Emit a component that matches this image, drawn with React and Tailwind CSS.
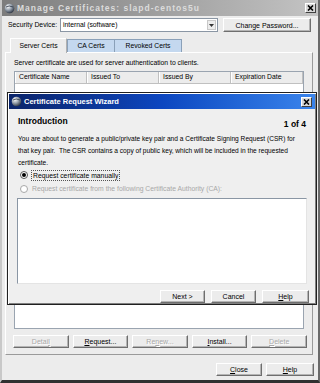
import React from "react";

const font = { fontFamily: '"Liberation Sans", Arial, sans-serif' };

const Btn = ({ children, disabled, className = "" }) => (
  <div
    className={`h-[13px] flex items-center justify-center bg-[#ececec] border border-t-white border-l-white border-r-[#6e6e6e] border-b-[#6e6e6e] shadow-[inset_-1px_-1px_0_#b4b4b4] text-[7px] leading-none ${
      disabled ? "text-[#a8a8a8] [text-shadow:1px_1px_0_#ffffff]" : "text-black"
    } ${className}`}
  >
    {children}
  </div>
);

const CloseBox = () => (
  <div className="w-[11px] h-[10px] bg-[#d8d8d8] border border-t-white border-l-white border-r-[#404040] border-b-[#404040] flex items-center justify-center">
    <svg width="7" height="6" viewBox="0 0 7 6">
      <path d="M1 0.5 L6 5.5 M6 0.5 L1 5.5" stroke="#000" strokeWidth="1.6" />
    </svg>
  </div>
);

const AppIcon = () => (
  <svg width="11" height="11" viewBox="0 0 11 11" className="shrink-0">
    <defs>
      <radialGradient id="g" cx="0.35" cy="0.3" r="0.8">
        <stop offset="0" stopColor="#ffffff" />
        <stop offset="0.45" stopColor="#9aa4b0" />
        <stop offset="1" stopColor="#1a2230" />
      </radialGradient>
    </defs>
    <circle cx="5.5" cy="5.5" r="4.8" fill="url(#g)" />
    <path d="M2 4 Q5 2 9 4" stroke="#2a3240" strokeWidth="0.8" fill="none" />
  </svg>
);

const Radio = ({ checked, disabled }) => (
  <div
    className={`w-[8px] h-[8px] rounded-full border ${
      disabled ? "border-[#a8a8a8]" : "border-[#555]"
    } bg-white flex items-center justify-center shrink-0`}
  >
    {checked && <div className="w-[4px] h-[4px] rounded-full bg-black" />}
  </div>
);

const Wizard = () => (
  <div className="absolute left-[5px] top-[92px] w-[310px] h-[213px] bg-[#efefef] border border-[#202020] shadow-[inset_1px_1px_0_#ffffff,inset_-1px_-1px_0_#808080] flex flex-col">
    <div className="h-[15px] mx-[1px] mt-[1px] bg-gradient-to-r from-[#0a246a] via-[#0c46c0] to-[#3a84ec] flex items-center pl-[2px] pr-[3px] gap-[2px]">
      <AppIcon />
      <span className="text-white font-bold text-[7.5px] flex-1">
        Certificate Request Wizard
      </span>
      <CloseBox />
    </div>
    <div className="flex justify-between items-start pl-[10px] pr-[10px] pt-[6px] h-[24px]">
      <span className="font-bold text-[8.5px] text-black">Introduction</span>
      <span className="font-bold text-[8.5px] text-black mt-[3px]">1 of 4</span>
    </div>
    <p className="px-[10px] text-[6.6px] leading-[12px] text-black whitespace-nowrap">
      You are about to generate a public/private key pair and a Certificate Signing Request (CSR) for
      <br />
      that key pair.&nbsp; The CSR contains a copy of public key, which will be included in the requested
      <br />
      certificate.
    </p>
    <div className="flex items-center gap-[3px] pl-[12px] h-[12px]">
      <Radio checked />
      <span className="text-[6.8px] text-black border border-dotted border-[#555] px-[1px] leading-[9px]">
        Request certificate manually
      </span>
    </div>
    <div className="flex items-center gap-[4px] pl-[12px] mt-[2px] h-[12px]">
      <Radio disabled />
      <span className="text-[6.8px] text-[#a8a8a8]">
        Request certificate from the following Certificate Authority (CA):
      </span>
    </div>
    <div className="mx-[9px] mt-[3px] h-[86px] bg-white border border-t-[#8a96a4] border-l-[#8a96a4] border-r-[#e4e4e4] border-b-[#e4e4e4]" />
    <div className="flex justify-end gap-[6px] pr-[7px] mt-[6px]">
      <Btn className="w-[45px]">Next &gt;</Btn>
      <Btn className="w-[45px]">Cancel</Btn>
      <Btn className="w-[47px]">
        <span className="underline">H</span>elp
      </Btn>
    </div>
  </div>
);

export default function App() {
  return (
    <div
      className="w-[320px] h-[383px] relative overflow-hidden bg-[#ececec] border-l-[2px] border-r-[2px] border-b-[3px] border-l-[#c8c8c8] border-r-[#6a6a6a] border-b-[#303030] flex flex-col"
      style={font}
    >
      <div className="h-[16px] bg-gradient-to-r from-[#7c7c7c] to-[#c4c4c4] flex items-center gap-[2px] -mx-[2px] px-[4px]">
        <AppIcon />
        <span className="text-[#dcdcdc] font-bold text-[8.5px] tracking-[1px] flex-1">
          Manage Certificates: slapd-centos5u
        </span>
        <CloseBox />
      </div>

      <div className="flex items-center h-[14px] mt-[2px] pl-[6px] pr-[6px]">
        <span className="text-[6.8px] text-black w-[52px]">Security Device:</span>
        <div className="w-[158px] h-[14px] bg-white border border-[#8a96a4] flex items-center justify-between pl-[2px]">
          <span className="text-[6.8px] text-black">internal (software)</span>
          <div className="w-[9px] h-[10px] mr-[1px] bg-[#ececec] border border-[#c8c8c8] flex items-center justify-center">
            <svg width="5" height="3" viewBox="0 0 5 3">
              <path d="M0 0 H5 L2.5 3 Z" fill="#333" />
            </svg>
          </div>
        </div>
        <Btn className="w-[88px] h-[14px] ml-[5px]">Change Password...</Btn>
      </div>

      <div className="flex items-end h-[14px] mt-[6px] pl-[8px]">
        <div className="w-[57px] flex items-center justify-center text-[6.8px] text-black bg-[#ececec] border border-b-0 border-[#b0b0b0] border-t-white border-l-white relative z-10 -mb-[1px] h-[15px]">
          Server Certs
        </div>
        <div className="w-[48px] h-[13px] flex items-center justify-center text-[6.8px] text-black bg-[#c4d8ef] border border-b-0 border-[#8aa0b8]">
          CA Certs
        </div>
        <div className="w-[67px] h-[13px] flex items-center justify-center text-[6.8px] text-black bg-[#c4d8ef] border border-b-0 border-l-0 border-[#8aa0b8]">
          Revoked Certs
        </div>
      </div>

      <div className="ml-[3px] w-[308px] h-[303px] border border-t-white border-l-white border-r-[#9a9a9a] border-b-[#9a9a9a] flex flex-col">
        <p className="text-[6.8px] text-black pl-[8px] mt-[5px] leading-[9px]">
          Server certificate are used for server authentication to clients.
        </p>
        <div className="ml-[8px] mt-[4px] w-[290px] h-[258px] bg-white border border-[#9aa4b0]">
          <div className="grid grid-cols-4 h-[12px] bg-[#ececec] border-b border-[#c0c0c0]">
            {["Certificate Name", "Issued To", "Issued By", "Expiration Date"].map((c) => (
              <div
                key={c}
                className="text-[6.8px] text-black flex items-center pl-[3px] border-r border-[#c0c0c0] border-l border-l-white"
              >
                {c}
              </div>
            ))}
          </div>
        </div>
        <div className="grid grid-cols-5 gap-[4px] ml-[7px] mt-[6px] w-[294px]">
          <Btn disabled>
            Detai<span className="underline">l</span>
          </Btn>
          <Btn>
            <span className="underline">R</span>equest...
          </Btn>
          <Btn disabled>
            Re<span className="underline">n</span>ew...
          </Btn>
          <Btn>
            <span className="underline">I</span>nstall...
          </Btn>
          <Btn disabled>
            <span className="underline">D</span>elete
          </Btn>
        </div>
      </div>

      <div className="flex justify-end gap-[4px] pr-[4px] mt-[8px]">
        <Btn className="w-[46px] h-[11px]">
          <span className="underline">C</span>lose
        </Btn>
        <Btn className="w-[48px] h-[11px]">
          <span className="underline">H</span>elp
        </Btn>
      </div>

      <Wizard />
    </div>
  );
}
